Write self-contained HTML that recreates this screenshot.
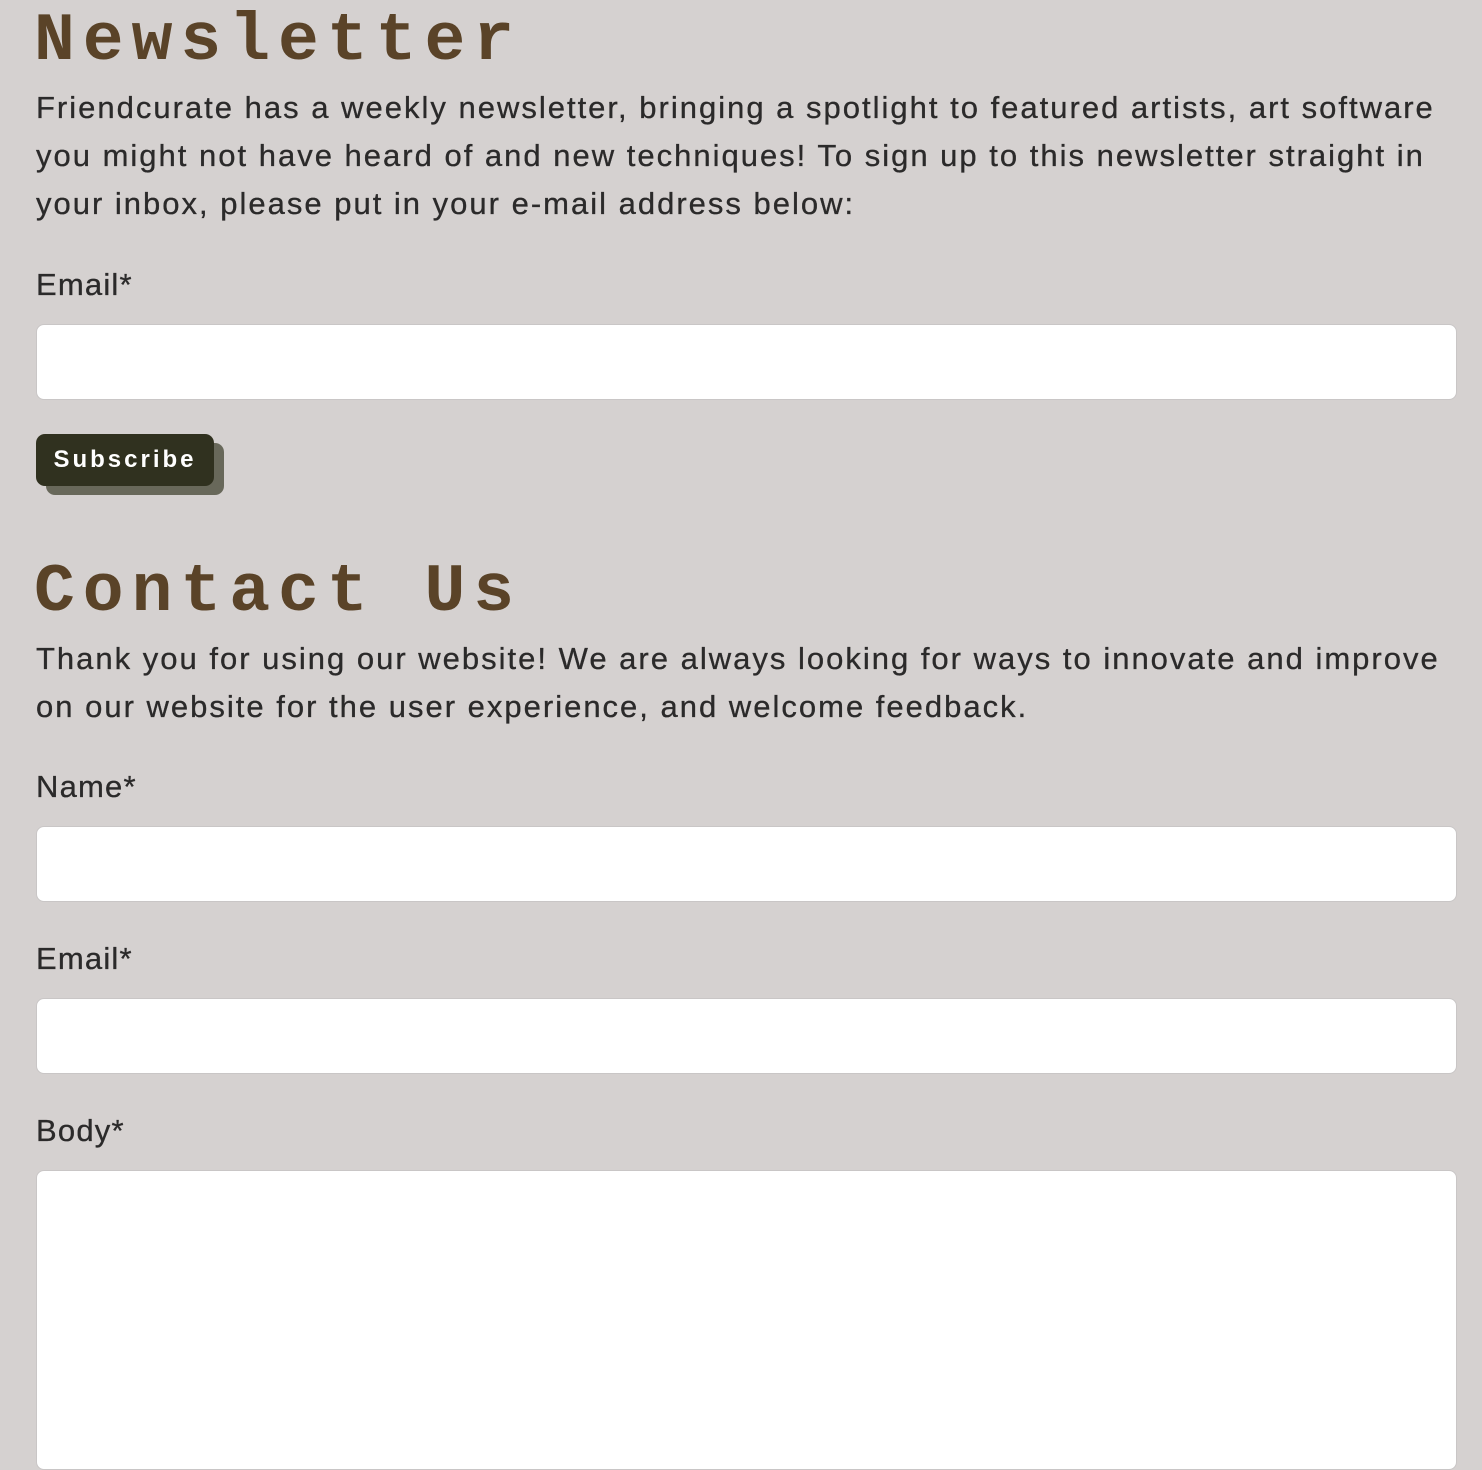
<!DOCTYPE html>
<html><head><style>
body{margin:0;width:1482px;height:1448px;overflow:hidden;background:#d5d1d0;font-family:"Liberation Sans",sans-serif;color:#2b2a2a;position:relative}
h2{position:absolute;left:34px;margin:0;font-family:"Liberation Mono",monospace;font-weight:bold;font-size:68px;letter-spacing:8px;color:#5a4328;line-height:1}
p{position:absolute;left:36px;margin:0;font-size:31px;line-height:48px;white-space:nowrap;letter-spacing:2px;-webkit-text-stroke:0.3px #2b2a2a}
.l{position:absolute;left:36px;font-size:31px;line-height:36px;letter-spacing:1.2px;-webkit-text-stroke:0.3px #2b2a2a}
.i{position:absolute;left:36px;width:1421px;background:#fff;border:1px solid #c9c6c6;border-radius:8px;box-sizing:border-box}
.b{position:absolute;left:36px;top:434px;width:178px;height:52px;background:#30311f;border-radius:9px;box-shadow:10px 9px 0 #68685a;color:#fff;font-size:24px;font-weight:bold;letter-spacing:3px;line-height:52px;text-align:center}
</style></head><body>
<h2 style="top:8px">Newsletter</h2>
<p style="top:84px">Friendcurate has a weekly newsletter, bringing a spotlight to featured artists, art software<br>you might not have heard of and new techniques! To sign up to this newsletter straight in<br>your inbox, please put in your e-mail address below:</p>
<div class="l" style="top:267px">Email*</div>
<div class="i" style="top:324px;height:76px"></div>
<div class="b">Subscribe</div>
<h2 style="top:559px">Contact Us</h2>
<p style="top:635px">Thank you for using our website! We are always looking for ways to innovate and improve<br>on our website for the user experience, and welcome feedback.</p>
<div class="l" style="top:769px">Name*</div>
<div class="i" style="top:826px;height:76px"></div>
<div class="l" style="top:941px">Email*</div>
<div class="i" style="top:998px;height:76px"></div>
<div class="l" style="top:1113px">Body*</div>
<div class="i" style="top:1170px;height:300px"></div>
</body></html>
